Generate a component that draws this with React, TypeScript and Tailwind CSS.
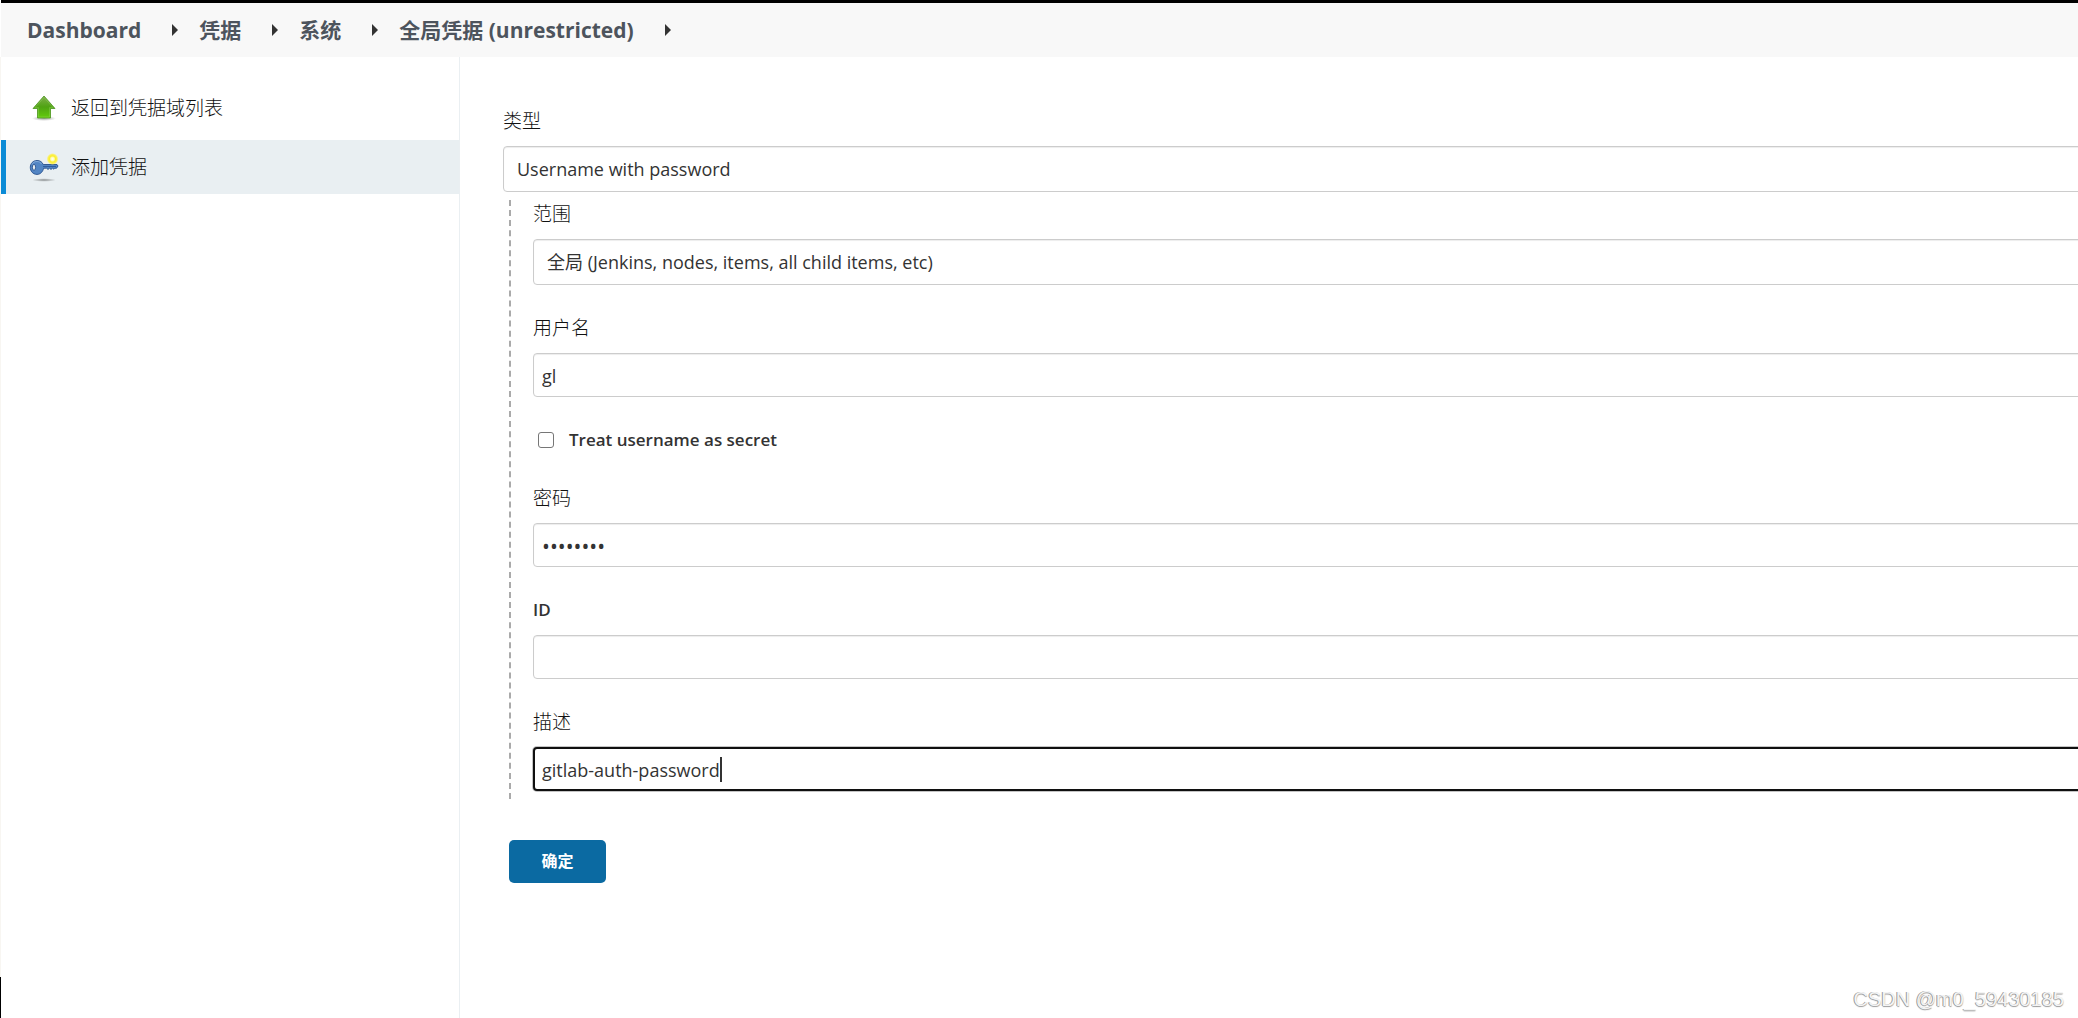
import { useState } from "react";

const CRUMBS = ["Dashboard", "凭据", "系统", "全局凭据 (unrestricted)"];

const INPUT = "block w-full h-11 rounded-[4px] bg-white pt-[2px] text-[#333]";
const INPUT_IDLE = "border border-[#ccc] px-2 shadow-[inset_0_1px_1px_rgba(0,0,0,0.075)]";
const INPUT_ACTIVE = "border-2 border-[#101010] px-[7px] caret-transparent shadow-[0_0_0_1px_#c4c4c4]";
const SELECT =
  "block w-full h-[46px] appearance-none rounded-[4px] border border-[#ccc] bg-white px-[13px] text-lg text-[#333] shadow-[inset_0_1px_1px_rgba(0,0,0,0.075)]";
const LABEL = "block mb-[13px] text-[19px] leading-6 font-light text-[#111]";

function UpIcon() {
  return (
    <svg viewBox="0 0 32 32" className="size-8 shrink-0" aria-hidden="true">
      <defs>
        <linearGradient id="up" x1="0" y1="0" x2="0" y2="1">
          <stop offset="0" stopColor="#7fae4c" />
          <stop offset="0.5" stopColor="#4fa312" />
          <stop offset="1" stopColor="#62cc0c" />
        </linearGradient>
        <radialGradient id="shade">
          <stop offset="0" stopColor="#000" stopOpacity="0.35" />
          <stop offset="1" stopColor="#000" stopOpacity="0" />
        </radialGradient>
      </defs>
      <ellipse cx="16" cy="26.5" rx="12" ry="2.5" fill="url(#shade)" />
      <path d="M16 4 27 16.5H22.500V26H9.500V16.5H5Z" fill="url(#up)" stroke="#4c9420" strokeWidth="0.8" strokeLinejoin="round" />
      <path d="M16 5.500 25 15.6H21.500V25H10.500V15.6H7Z" fill="none" stroke="#a5de72" strokeOpacity="0.4" strokeWidth="0.8" />
    </svg>
  );
}

function KeyIcon() {
  return (
    <svg viewBox="0 0 32 32" className="size-8 shrink-0" aria-hidden="true">
      <defs>
        <radialGradient id="glow">
          <stop offset="0" stopColor="#fff" />
          <stop offset="0.3" stopColor="#fffbb0" />
          <stop offset="0.5" stopColor="#fbee2c" />
          <stop offset="0.75" stopColor="#fbf05a" />
          <stop offset="1" stopColor="#fbf27a" stopOpacity="0" />
        </radialGradient>
        <radialGradient id="keyShade">
          <stop offset="0" stopColor="#000" stopOpacity="0.4" />
          <stop offset="1" stopColor="#000" stopOpacity="0" />
        </radialGradient>
      </defs>
      <ellipse cx="16" cy="29" rx="12" ry="1.8" fill="url(#keyShade)" />
      <path
        d="M9 9.500c3 0 5.200 1.500 6.200 4H29l1 1.500-1.400 2.200h-1.600l-1 1-1.500-1-1.500 1.200-1.500-1.200-1.500 1.200-1.500-1.200h-2.800c-1 3.600-3.200 6.200-6.700 6.200-4 0-6.700-3.200-6.700-7s2.700-6.900 6.700-6.900Z"
        fill="#5285c4"
        stroke="#28508c"
        strokeWidth="0.9"
        strokeLinejoin="round"
      />
      <path d="M15 15.500H28" stroke="#2d5797" strokeWidth="0.9" />
      <path d="M4 13.500c.8-2 2.600-3 5-3 2 0 3.500.8 4.500 2.500" fill="none" stroke="#8fb4e0" strokeWidth="0.8" />
      <ellipse cx="6" cy="16.300" rx="1.600" ry="3" fill="#e9eff2" stroke="#28508c" strokeWidth="0.9" />
      <circle cx="24.500" cy="8" r="6" fill="url(#glow)" />
    </svg>
  );
}

function Crumb({ text }: { text: string }) {
  return (
    <li className="flex items-center">
      <a href="#" className="mr-[31px] pt-[2px]">{text}</a>
      <svg viewBox="0 0 6 12" className="mr-[21px] h-3 w-[6px]" fill="#333" aria-hidden="true">
        <path d="M0 0 6 6 0 12Z" />
      </svg>
    </li>
  );
}

export default function App() {
  const [username, setUsername] = useState("gl");
  const [password, setPassword] = useState("12345678");
  const [id, setId] = useState("");
  const [description, setDescription] = useState("gitlab-auth-password");
  const [secret, setSecret] = useState(false);

  return (
    <div className="relative flex min-h-screen flex-col overflow-x-hidden bg-white font-['Open_Sans','Noto_Sans_CJK_SC',sans-serif] text-[#333]">
      <header className="ml-px h-[57px] border-t-[3px] border-black bg-[#f8f8f8]">
        <ol className="flex h-full items-center pl-[26px] text-[21px] font-bold text-[#4d545d]">
          {CRUMBS.map((c) => (
            <Crumb key={c} text={c} />
          ))}
        </ol>
      </header>

      <div className="flex grow">
        <nav className="w-[460px] shrink-0 border-x border-l-[#f8f6f2] border-r-[#eaeff2] pt-6 text-[19px] font-light text-[#111]">
          <a href="#" className="mb-[5px] flex h-[54px] items-center gap-[11px] pl-[27px]">
            <UpIcon />
            返回到凭据域列表
          </a>
          <a href="#" className="flex h-[54px] items-center gap-[11px] border-l-[5px] border-[#0b8bd6] bg-[#e9eff2] pl-[22px]">
            <KeyIcon />
            添加凭据
          </a>
        </nav>

        <main className="grow overflow-hidden pt-[52px] pl-[43px]">
          <form className="-mr-4" onSubmit={(e) => e.preventDefault()}>
            <label htmlFor="kind" className={LABEL}>类型</label>
            <select id="kind" className={SELECT}>
              <option>Username with password</option>
            </select>

            <div className="mt-2 ml-[6px] border-l-2 border-dashed border-[#aaa] pt-[2px] pb-2 pl-[22px]">
              <label htmlFor="scope" className={LABEL}>范围</label>
              <select id="scope" className={SELECT}>
                <option>全局 (Jenkins, nodes, items, all child items, etc)</option>
              </select>

              <div className="mt-[31px]">
                <label htmlFor="username" className={LABEL}>用户名</label>
                <input
                  id="username"
                  className={`${INPUT} ${INPUT_IDLE} text-lg`}
                  value={username}
                  onChange={(e) => setUsername(e.target.value)}
                />
              </div>

              <label className="mt-[31px] flex h-6 items-center gap-[15px] pl-[5px] text-[17px] font-semibold">
                <input
                  type="checkbox"
                  checked={secret}
                  onChange={(e) => setSecret(e.target.checked)}
                  className="size-4 appearance-none rounded-[3px] border border-[#767676] bg-white checked:bg-[#0b6aa2]"
                />
                Treat username as secret
              </label>

              <div className="mt-[34px]">
                <label htmlFor="password" className={LABEL}>密码</label>
                <input
                  id="password"
                  type="password"
                  className={`${INPUT} ${INPUT_IDLE} text-[21px]`}
                  value={password}
                  onChange={(e) => setPassword(e.target.value)}
                />
              </div>

              <div className="mt-[31px]">
                <label htmlFor="cred-id" className="mb-[13px] block text-[17px] leading-6 font-semibold">ID</label>
                <input
                  id="cred-id"
                  className={`${INPUT} ${INPUT_IDLE} text-lg`}
                  value={id}
                  onChange={(e) => setId(e.target.value)}
                />
              </div>

              <div className="mt-[31px]">
                <label htmlFor="description" className={LABEL}>描述</label>
                <div className="relative">
                  <input
                    id="description"
                    className={`${INPUT} ${INPUT_ACTIVE} text-lg`}
                    value={description}
                    onChange={(e) => setDescription(e.target.value)}
                  />
                  <span className="absolute top-[10px] left-[187px] h-[25px] w-[2px] bg-[#333]" />
                </div>
              </div>
            </div>

            <button
              type="submit"
              className="mt-[41px] ml-[6px] block h-[43px] w-[97px] rounded-[5px] bg-[#0b6aa2] pb-[2px] text-base font-bold text-white"
            >
              确定
            </button>
          </form>
        </main>
      </div>

      <div className="absolute bottom-0 left-0 h-[41px] w-px bg-black" />
      <p className="absolute right-[14px] bottom-[7px] font-['Liberation_Sans',sans-serif] text-[20px] leading-6 text-[#f4f4f4] [text-shadow:-1px_0_0_#999,0_1px_1px_#999]">
        CSDN @m0_59430185
      </p>
    </div>
  );
}
